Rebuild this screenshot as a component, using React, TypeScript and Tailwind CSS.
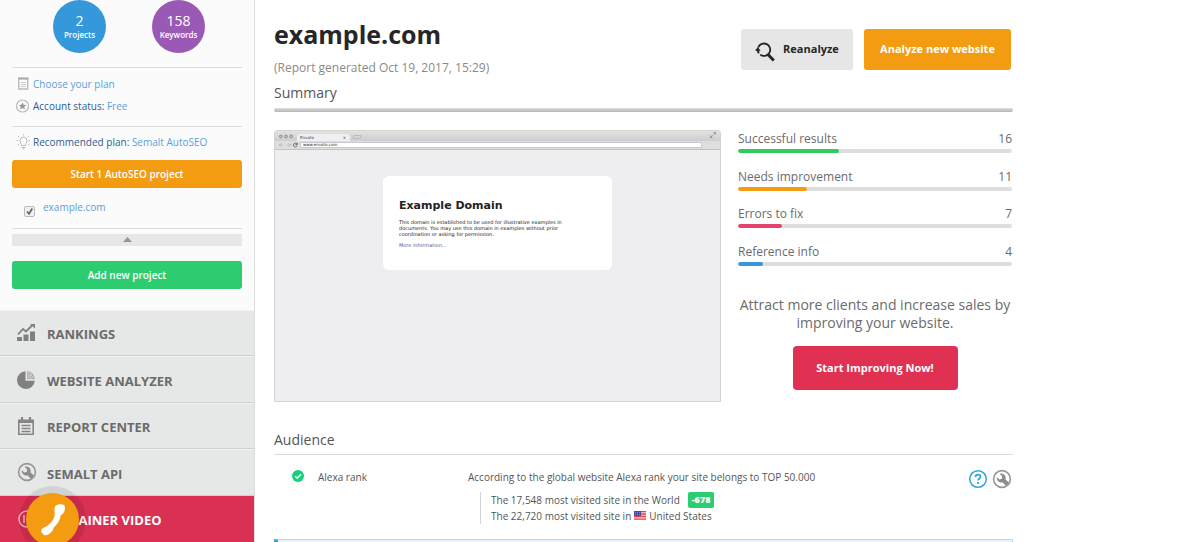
import React from "react";

const navItems = ["RANKINGS", "WEBSITE ANALYZER", "REPORT CENTER", "SEMALT API"];

const stats = [
  { label: "Successful results", value: 16, share: 37, color: "bg-[#2ecc5f]" },
  { label: "Needs improvement", value: 11, share: 25, color: "bg-[#f39c12]" },
  { label: "Errors to fix", value: 7, share: 16, color: "bg-[#e5446a]" },
  { label: "Reference info", value: 4, share: 9, color: "bg-[#3498db]" },
];

function WrenchIcon({ size }: { size: number }) {
  return (
    <svg width={size} height={size} viewBox="0 0 20 20" fill="none" aria-hidden="true">
      <circle cx="10" cy="10" r="8.4" stroke="#969696" strokeWidth="1.6" />
      <path
        d="M4.800 8.200 7.500 10.600 9.900 9.800 10.100 7.200 7.600 4.800C10.500 3.900 13.600 5.600 13.700 8.800L13.500 10.600 17 13.600 14 17 10.800 13.400C7.800 14.200 4.300 11.800 4.800 8.200Z"
        fill="#8c8c8c"
      />
    </svg>
  );
}

function NavIcon({ index }: { index: number }) {
  if (index === 0)
    return (
      <svg width="18" height="18" viewBox="0 0 18 18" aria-hidden="true">
        <path d="M0 13h5v4H0zM6.500 10.500h5V17h-5zM13 7.500h5V17h-5z" fill="#808080" />
        <path d="M1 10.500 6 5l3 2.500L15.500 1" fill="none" stroke="#808080" strokeWidth="1.800" />
        <path d="M13 0h5v4.500z" fill="#808080" />
      </svg>
    );
  if (index === 1)
    return (
      <svg width="18" height="18" viewBox="0 0 18 18" aria-hidden="true">
        <path d="M8.500.2A8.900 8.900 0 1 0 17.800 9.700H8.500z" fill="#808080" />
        <path d="M10 0A8.500 8.500 0 0 1 18 8.300h-8z" fill="#b0b0b0" />
        <path d="M10.500 3.500 15 8M11 1l6 6M10.500 7 15 2.500" stroke="#dedede" strokeWidth=".7" />
      </svg>
    );
  if (index === 2)
    return (
      <svg width="18" height="18" viewBox="0 0 18 18" fill="none" aria-hidden="true">
        <path d="M1.800 3.200h14.400v14H1.800z" stroke="#858585" strokeWidth="1.600" />
        <path d="M1 3h16v3H1z" fill="#858585" />
        <path d="M5 0v4M13 0v4" stroke="#858585" strokeWidth="2.200" />
        <path d="M4.500 8.500h9M4.500 11.500h9M4.500 14.500h9" stroke="#858585" strokeWidth="1.400" />
      </svg>
    );
  return <WrenchIcon size={20} />;
}

function SideLink({ children }: { children: React.ReactNode }) {
  return (
    <a href="#" className="text-[#5c9fd6]">
      {children}
    </a>
  );
}

function Sidebar() {
  return (
    <aside className="flex w-[255px] shrink-0 flex-col border-r border-[#dcdcdc] bg-[#fbfbfb]">
      <div className="flex flex-col px-3 text-[10px] leading-[22px] text-[#2f5d91]">
        <div className="flex gap-[46px] pl-[41px]">
          <a href="#" className="flex size-[53px] flex-col items-center justify-center rounded-full bg-[#3498db] text-white">
            <span className="text-sm leading-4">2</span>
            <span className="text-[8px] leading-3 font-semibold">Projects</span>
          </a>
          <a href="#" className="flex size-[53px] flex-col items-center justify-center rounded-full bg-[#9b59b6] text-white">
            <span className="text-sm leading-4">158</span>
            <span className="text-[8px] leading-3 font-semibold">Keywords</span>
          </a>
        </div>
        <div className="mt-[14px] border-y border-[#dcdcdc] pt-[5px] pb-[9px]">
          <div className="flex items-center gap-1">
            <svg width="17" height="14" viewBox="0 0 17 14" fill="none" aria-hidden="true">
              <path d="M6.700 1.500h9v10.500h-9z" stroke="#bbb" strokeWidth="1.400" />
              <path d="M6 1.500h10.400" stroke="#aaa" strokeWidth="2" />
              <path d="M8.500 5.500h5.500M8.500 7.500h5.500M8.500 9.500h5.500" stroke="#ccc" />
            </svg>
            <SideLink>Choose your plan</SideLink>
          </div>
          <div className="flex items-center gap-1">
            <svg width="17" height="14" viewBox="0 0 17 14" className="overflow-visible" aria-hidden="true">
              <circle cx="10.500" cy="7" r="6" fill="none" stroke="#bbb" strokeWidth="1.200" />
              <path d="m10.500 3.200 1.100 2.500 2.700.3-2 1.800.6 2.700-2.400-1.400-2.400 1.400.6-2.700-2-1.800 2.700-.3z" fill="#999" />
            </svg>
            <span>
              Account status: <SideLink>Free</SideLink>
            </span>
          </div>
        </div>
        <div className="flex items-center gap-1 pt-1">
          <svg width="17" height="14" viewBox="0 0 17 14" className="overflow-visible" fill="none" stroke="#bbb" aria-hidden="true">
            <path d="M9.500 10.500C9.500 8.500 8 8 8 5.500a3.500 3.500 0 0 1 7 0C15 8 13.500 8.500 13.500 10.500z" />
            <path d="M9.500 12.500h4M10.500 14h2" />
            <path d="M4.500 5.500h2M16.500 5.500h2M6 1l1.500 1.200M17 1l-1.500 1.200M11.500-1v1.500M6 10l1.200-1M17 10l-1.200-1" strokeDasharray="1.500 .6" />
          </svg>
          <span>
            Recommended plan: <SideLink>Semalt AutoSEO</SideLink>
          </span>
        </div>
        <button className="mt-[7px] h-7 rounded-[3px] bg-[#f39c12] font-semibold text-white">Start 1 AutoSEO project</button>
        <div className="flex h-[41px] border-b border-[#dcdcdc] pt-2">
          <label className="flex gap-2 pl-3 text-[#5c9fd6]">
            <span className="relative mt-[10px] block size-[11px]">
              <input type="checkbox" defaultChecked className="peer block size-[11px] appearance-none rounded-[2px] border border-[#bbb] bg-[#f1f1f1]" />
              <svg viewBox="0 0 11 11" className="pointer-events-none absolute inset-0 hidden peer-checked:block" aria-hidden="true">
                <path d="m3 5.500 2 2.300L8.300 2.500" fill="none" stroke="#666" strokeWidth="1.700" />
              </svg>
            </span>
            example.com
          </label>
        </div>
        <button aria-label="Collapse project list" className="mt-[5px] flex h-3 justify-center bg-[#e6e8e7] pt-[3px]">
          <svg width="9" height="5" viewBox="0 0 9 5" aria-hidden="true">
            <path d="m0 5 4.500-5L9 5z" fill="#969696" />
          </svg>
        </button>
        <button className="mt-[15px] h-7 rounded-[3px] bg-[#2ecc71] font-semibold text-white">Add new project</button>
      </div>
      <nav className="relative mt-[21px] grid h-[232px] grid-rows-5 text-[13px] font-bold text-[#6b6b6b]">
        {navItems.map((item, i) => (
          <a
            key={item}
            href="#"
            className="flex items-center border-t border-b border-t-[#f2f3f3] border-b-[#cfd1d0] bg-[#e6e8e7] pl-[17px]"
          >
            <span className="flex w-[30px]">
              <NavIcon index={i} />
            </span>
            <span className="pt-1">{item}</span>
          </a>
        ))}
        <a href="#" className="flex items-center bg-[#da3054] pl-[17px] text-white">
          <span className="flex w-[30px]">
            <svg width="20" height="20" viewBox="0 0 20 20" aria-hidden="true">
              <circle cx="10" cy="10" r="8" fill="none" stroke="#f3b9c6" strokeWidth="1.500" />
              <path d="M7 6v8" stroke="#f3b9c6" strokeWidth="1.500" />
            </svg>
          </span>
          <span className="pt-1">EXPLAINER VIDEO</span>
        </a>
        <button
          aria-label="Call us"
          className="absolute -bottom-1 left-[26px] flex size-[53px] items-center justify-center rounded-full bg-[#f39c12] shadow-[0_0_0_7px_rgba(0,0,0,0.09)]"
        >
          <svg width="24" height="32" viewBox="0 0 24 32" aria-hidden="true">
            <path
              d="M13.500 4.500C13.600 2.200 15.500.6 18.500.3 21.500 0 23.500.8 23.900 2.500 24.200 4.500 23.700 7.500 22.500 9 21.700 10 20.700 10.600 19.900 11 18.900 16.500 16.300 20.800 12.300 23.900 12.300 25.200 11.900 26.200 10.800 27.400 9.300 29.200 7 30.800 5 31.300 3.200 31.700.4 28.800.3 27 .2 25.300 1.500 24.300 3 23.600 4.300 23 5.300 22.700 6.100 22 10 19 12.500 16.200 13.400 12.500 14 9.800 13.200 7 13.500 4.500Z"
              fill="#fff"
            />
          </svg>
        </button>
      </nav>
    </aside>
  );
}

function SitePreview() {
  return (
    <div className="h-[272px] min-w-0 flex-1 overflow-hidden rounded-t-[3px] border border-[#d4d4d4] bg-[#eeeef0] font-['DejaVu_Sans',sans-serif]">
      <div className="flex h-[10px] items-end bg-linear-to-b from-[#e2e2e2] to-[#cdcdcd] pl-1">
        <svg width="15" height="8" viewBox="0 0 15 8" fill="#c4c4c4" stroke="#8c8f94" aria-hidden="true">
          <circle cx="1.800" cy="3.500" r="1.400" />
          <circle cx="7" cy="3.500" r="1.400" />
          <circle cx="12.200" cy="3.500" r="1.400" />
        </svg>
        <div className="ml-[3px] flex h-[7px] w-[53px] items-center justify-between rounded-t-[3px] bg-[#efefef] pr-1 pl-[3px] text-[4px] leading-none text-[#333]">
          <span>Envato</span>
          <span>×</span>
        </div>
        <div className="mb-[2px] ml-[3px] h-1 w-2 -skew-x-12 rounded-[1px] border border-[#bbb]" />
        <svg width="6" height="6" viewBox="0 0 6 6" className="mr-1 mb-[3px] ml-auto" aria-hidden="true">
          <path d="M3 0h3v3zM0 3v3h3z" fill="#999" />
          <path d="M1 5 5 1" stroke="#999" strokeWidth=".6" />
        </svg>
      </div>
      <div className="flex h-[9px] items-center border-b border-[#c2c2c2] bg-[#dedede] pr-[18px] pl-1">
        <svg width="19" height="6" viewBox="0 0 19 6" fill="none" stroke="#b8b8b8" strokeWidth=".8" aria-hidden="true">
          <path d="M2.500 1.500 0 3l2.500 1.500M0 3h4M9.500 1.500 12 3 9.500 4.500M8 3h4" />
          <path d="M18 2.200A1.900 1.900 0 1 0 18 4M18.300.7v2h-2" stroke="#555" />
        </svg>
        <div className="ml-[2px] flex h-[6px] flex-1 items-center rounded-[1px] border border-[#c5c9d2] bg-white pl-[2px] text-[4px] leading-none text-[#222]">
          www.envato.com
        </div>
      </div>
      <div className="mx-auto mt-[26px] h-[94px] w-[229px] rounded-md bg-white px-4 pt-[23px] text-[#222]">
        <h2 className="text-[11px] leading-[14px] font-bold">Example Domain</h2>
        <p className="mt-[6px] w-[184px] text-[5px] leading-[6px]">
          This domain is established to be used for illustrative examples in
          <br />
          documents. You may use this domain in examples without prior
          <br />
          coordination or asking for permission.
        </p>
        <p className="mt-[5px] text-[5px] leading-[6px] text-[#4a5a9c]">
          <a href="#">More information...</a>
        </p>
      </div>
    </div>
  );
}

function FlagIcon() {
  return (
    <svg width="12" height="9" viewBox="0 0 12 9" className="mx-[3px] inline-block align-baseline" aria-hidden="true">
      <path d="M0 0h12v9H0z" fill="#f3dede" />
      <path d="M0 .5h12M0 3h12M0 5.500h12M0 8.200h12" stroke="#e04848" strokeWidth="1.300" />
      <path d="M0 0h7v5H0z" fill="#4a4ba5" />
      <path d="M1 1.500h5M1 3.500h5" stroke="#a9a9dd" strokeWidth=".6" strokeDasharray="1 1" />
    </svg>
  );
}

export default function App() {
  return (
    <div className="flex min-h-screen bg-white font-['Open_Sans',sans-serif] text-[#555]">
      <Sidebar />
      <main className="min-w-0 max-w-[758px] flex-1 pl-[19px]">
        <header className="flex items-start justify-between pt-5">
          <div>
            <h1 className="text-[25px] leading-7 font-bold text-[#262626]">example.com</h1>
            <p className="mt-[10px] text-xs leading-5 text-[#8a8a8a]">(Report generated Oct 19, 2017, 15:29)</p>
          </div>
          <div className="mt-[9px] mr-[2px] flex gap-[11px] text-[11px] font-bold">
            <button className="flex h-[41px] w-28 items-center justify-center gap-2 rounded-[3px] bg-[#e6e6e6] text-[#262626]">
              <svg width="20" height="20" viewBox="0 0 20 20" fill="none" className="mt-1" aria-hidden="true">
                <path d="M3.200 5.500A6.200 6.200 0 1 1 5.200 12.600" stroke="#262626" strokeWidth="1.800" />
                <path d="m13 12.500 5.800 6" stroke="#262626" strokeWidth="3" />
                <path d="M0 8.800 2.800 5l2.800 3.800H4l.6 2.200-1.700.7-1.200-2.900z" fill="#262626" />
              </svg>
              Reanalyze
            </button>
            <button className="h-[41px] w-[147px] rounded-[3px] bg-[#f39c12] text-white">Analyze new website</button>
          </div>
        </header>
        <h2 className="mt-[5px] text-sm leading-5">Summary</h2>
        <div className="mt-[5px] h-1 rounded-full bg-linear-to-b from-[#dedede] to-[#b4b4b4]" />
        <section className="mt-[18px] flex gap-[17px] pr-px">
          <SitePreview />
          <div className="w-[274px] shrink-0 text-[#6b6b6b]">
            <ul className="flex h-[136px] flex-col justify-between text-xs leading-[18px]">
              {stats.map((s) => (
                <li key={s.label}>
                  <div className="flex justify-between">
                    <span>{s.label}</span>
                    <span>{s.value}</span>
                  </div>
                  <div className="mt-px h-1 overflow-hidden rounded-full bg-[#dedede]">
                    <div className={`h-full rounded-full ${s.color}`} style={{ width: `${s.share}%` }} />
                  </div>
                </li>
              ))}
            </ul>
            <p className="mt-[30px] text-center text-sm leading-[18px]">
              Attract more clients and increase sales by improving your website.
            </p>
            <button className="mx-auto mt-[14px] block h-11 w-[165px] rounded-[4px] bg-[#e03153] text-[11px] font-bold text-white">
              Start Improving Now!
            </button>
          </div>
        </section>
        <h2 className="mt-7 border-b border-[#d9d9d9] pb-1 text-sm leading-5">Audience</h2>
        <section className="flex pt-[14px] pr-px pl-[18px] text-[10px] leading-4">
          <svg width="12" height="12" viewBox="0 0 12 12" className="mt-px shrink-0" aria-hidden="true">
            <circle cx="6" cy="6" r="6" fill="#14d07a" />
            <path d="m3.200 6.200 2 2L9 4.300" fill="none" stroke="#fff" strokeWidth="1.600" />
          </svg>
          <h3 className="w-[164px] shrink-0 pl-[14px]">Alexa rank</h3>
          <div className="min-w-0 flex-1">
            <p>According to the global website Alexa rank your site belongs to TOP 50.000</p>
            <div className="mt-[7px] ml-3 border-l border-[#d4d4d4] pl-[10px]">
              <p className="flex items-center">
                The 17,548 most visited site in the World
                <span className="ml-2 rounded-[2px] bg-[#2ecc71] px-1 text-[9px] font-extrabold text-white">-678</span>
              </p>
              <p>
                The 22,720 most visited site in
                <FlagIcon />
                United States
              </p>
            </div>
          </div>
          <div className="flex items-start gap-1">
            <a href="#" aria-label="Help">
              <svg width="20" height="20" viewBox="0 0 20 20" fill="none" stroke="#2da3dc" aria-hidden="true">
                <circle cx="10" cy="10" r="8.300" strokeWidth="1.500" />
                <path d="M7.500 8C7.500 4.800 12.500 5 12.500 7.800c0 1.700-2.400 1.800-2.400 3.800M10.100 13v2" strokeWidth="1.700" />
              </svg>
            </a>
            <a href="#" aria-label="Tools">
              <WrenchIcon size={20} />
            </a>
          </div>
        </section>
        <div className="mt-[15px] h-[3px] border border-b-0 border-[#b9d8e8] border-l-4 border-l-[#2da3cf] bg-[#e7f3f9]" />
      </main>
    </div>
  );
}
